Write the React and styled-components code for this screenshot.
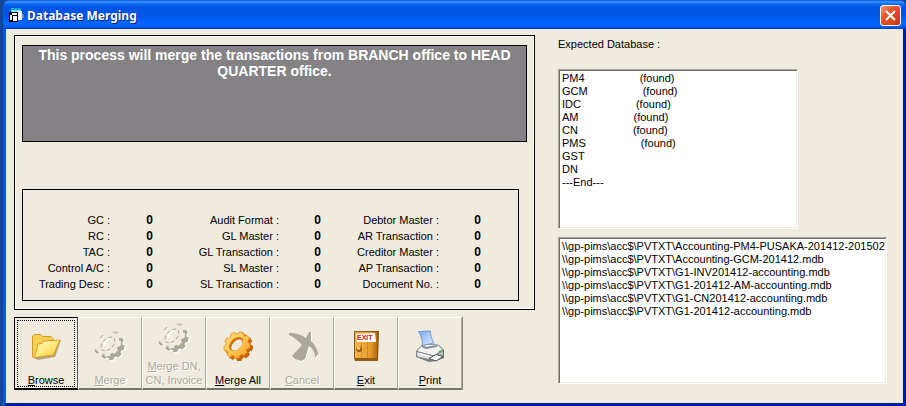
import React from "react";
import styled, { createGlobalStyle, css } from "styled-components";

const GlobalStyle = createGlobalStyle`
  *, *::before, *::after { box-sizing: border-box; }
  body { margin: 0; background: #12459c; }
`;

const Window = styled.div`
  display: flex;
  flex-direction: column;
  min-height: 100vh;
  margin-left: 3px;
  border: solid #0831d9;
  border-width: 0 3px 4px;
  border-color: #0831d9 #001ea0 #001ea0 #0a55ee;
  border-radius: 8px 8px 0 0;
  background: #efebdf;
  color: #000;
  font: 11px/13px "Liberation Sans", Arial, sans-serif;
`;

const TitleBar = styled.header`
  display: flex;
  align-items: center;
  gap: 3px;
  height: 29px;
  margin: 0 -3px;
  padding: 2px 5px 0 5px;
  border-radius: 7px 7px 0 0;
  background: linear-gradient(#0a50d8 0, #3d95ff 2px, #0a68f5 4px, #0054e3 8px, #0055e8 15px, #0066ff 23px, #0264fa 26px, #003dc4 29px);
`;

const Title = styled.h1`
  flex: 1;
  margin: 0;
  color: #fff;
  font: bold 12px/16px "Noto Sans", "Open Sans", sans-serif;
  text-shadow: 1px 1px 0 #0a1f86;
`;

const CloseButton = styled.button`
  display: grid;
  place-items: center;
  width: 21px;
  height: 21px;
  padding: 0;
  border: 1px solid #fff;
  border-radius: 3px;
  background: linear-gradient(135deg, #f0977b, #e2532c 40%, #d8431b 75%, #b93210);
`;

const Content = styled.main`
  display: grid;
  grid-template-columns: minmax(0, 521fr) minmax(0, 329fr);
  gap: 23px;
  flex: 1;
  padding: 6px 16px 11px 8px;
`;

const Column = styled.div`
  display: flex;
  flex-direction: column;
  align-items: flex-start;
`;

const Frame = styled.section`
  align-self: stretch;
  padding: 9px 7px 8px;
  border: 1px solid #000;
  box-shadow: inset 1px 1px #fff, inset -1px -1px #fff;
`;

const Notice = styled.p`
  height: 97px;
  margin: 0 0 47px;
  padding: 1px 4px;
  border: 1px solid #000;
  background: #848284;
  color: #fff;
  font-size: 14px;
  font-weight: bold;
  line-height: 16px;
  text-align: center;
`;

const Counters = styled.div`
  display: grid;
  grid-template-columns: 87px 43px 126px 42px 118px 42px;
  margin-right: 8px;
  padding: 22px 0 8px;
  border: 1px solid #000;
  line-height: 16px;
  text-align: right;
`;

const Count = styled.output`
  font-size: 12px;
  font-weight: bold;
`;

const Toolbar = styled.div`
  display: flex;
  margin-top: 7px;
  border-right: 1px solid #848278;
`;

const ToolButton = styled.button`
  display: flex;
  flex-direction: column;
  align-items: center;
  justify-content: flex-end;
  gap: ${(p) => (p.$twoLine ? 5 : 11)}px;
  width: 64px;
  height: 73px;
  padding: 0 0 1px;
  border: solid;
  border-width: 1px 1px 2px;
  border-color: #fff #aca899 #77746a #fff;
  background: #efebdf;
  color: ${(p) => (p.disabled ? "#aca899" : "#000")};
  font: inherit;
  line-height: 14px;
  white-space: nowrap;
  ${(p) => p.disabled && css`text-shadow: 1px 1px #fff;`}
  ${(p) =>
    p.$focused &&
    css`
      border-color: #000 #555 #000 #000;
      outline: 1px dotted #000;
      outline-offset: -4px;
    `}
`;

const Mnemonic = styled.span`
  text-decoration: underline;
  text-underline-offset: 1px;
`;

const ListLabel = styled.label`
  margin: 3px 0 18px;
`;

const ListBox = styled.select`
  width: ${(p) => p.$width};
  height: ${(p) => p.$height}px;
  padding: 2px 1px 1px;
  margin: 0 0 8px;
  overflow: hidden;
  border: 1px solid;
  border-color: #aca899 #fff #fff #aca899;
  border-radius: 0;
  box-shadow: inset 1px 1px #716f64, inset -1px -1px #f1efe2;
  background: #fff;
  color: #000;
  font: inherit;
  outline: 0;

  option {
    min-height: 13px;
    padding: 0 2px;
    font: inherit;
    line-height: 13px;
  }
`;

const Icon = styled.svg.attrs((p) => ({ viewBox: p.viewBox || "0 0 32 32", "aria-hidden": true }))`
  display: block;
  width: 32px;
  height: 32px;
`;

const TitleIcon = styled(Icon)`
  width: 16px;
  height: 16px;
`;

const CloseIcon = styled(Icon)`
  width: 13px;
  height: 13px;
`;

function gearPath(cx, cy) {
  const teeth = 9;
  const tilt = -Math.PI / 4;
  const points = [];
  for (let i = 0; i < teeth; i++) {
    [[-0.34, 11.8], [-0.24, 14], [0.24, 14], [0.34, 11.8]].forEach(([d, r]) => {
      const a = ((i + d) / teeth) * Math.PI * 2 + 0.2;
      const x = Math.cos(a) * r;
      const y = Math.sin(a) * r * 0.88;
      const px = cx + x * Math.cos(tilt) - y * Math.sin(tilt);
      const py = cy + x * Math.sin(tilt) + y * Math.cos(tilt);
      points.push(`${px.toFixed(2)} ${py.toFixed(2)}`);
    });
  }
  return `M${points.join("L")}Z`;
}

const GearIcon = () => (
  <Icon>
    <defs>
      <linearGradient id="gearFace" x1="0" y1="0" x2="1" y2="1">
        <stop offset="0" stopColor="#ffe58a" />
        <stop offset="0.5" stopColor="#ffc652" />
        <stop offset="1" stopColor="#f7a02a" />
      </linearGradient>
    </defs>
    <path d={gearPath(17.5, 17.5)} fill="#c96508" stroke="#c0640c" strokeLinejoin="round" />
    <path d={gearPath(15, 15)} fill="url(#gearFace)" stroke="#ee9a24" strokeLinejoin="round" />
    <ellipse cx="14" cy="14" rx="8.3" ry="5.3" transform="rotate(-45 14 14)" fill="#d0700e" />
    <ellipse cx="14.8" cy="15" rx="6.8" ry="4" transform="rotate(-45 14.8 15)" fill="#efebdf" />
  </Icon>
);

const GearOffIcon = () => (
  <Icon>
    <path d={gearPath(18.5, 18)} fill="#fff" />
    <path d={gearPath(17.5, 17)} fill="#aca899" />
    <path d={gearPath(13.5, 13)} fill="#efebdf" stroke="#efebdf" />
    <path d="M20 1v2h3V1M6 8l3-3" fill="none" stroke="#aca899" />
    <ellipse cx="14" cy="14" rx="8.3" ry="5" transform="rotate(-45 14 14)" fill="none" stroke="#aca899" strokeDasharray="4 2" />
    <path d="M10 16c0-4 3-7 7-7" fill="none" stroke="#fff" strokeWidth="2" />
    <path d="M1 20l3 3" fill="none" stroke="#aca899" strokeWidth="2" />
  </Icon>
);

const FolderIcon = () => (
  <Icon>
    <defs>
      <linearGradient id="folderFront" x1="0" y1="0" x2="1" y2="1">
        <stop offset="0" stopColor="#fffbd0" />
        <stop offset="0.5" stopColor="#ffe97c" />
        <stop offset="1" stopColor="#f6bd2c" />
      </linearGradient>
    </defs>
    <path d="M4 28L31 10l-6 17L8 30z" fill="#8a7440" opacity="0.6" />
    <path d="M2.500 6l2-1.500h6l2 2h8.500l2 2V12L5 28l-2.500-1z" fill="#f7cf52" stroke="#d3982a" />
    <path d="M4.500 27.500L8 14l4-.5 2-2.500 16-1-6.500 15z" fill="url(#folderFront)" stroke="#d89c25" strokeLinejoin="round" />
  </Icon>
);

const cancelShape = "M3 3c7 0 13 2 17 5l3-6h2v9c5 5 7 9 7 13l-3 4c0-6-2-9-6-12l-4 13-4 2-6-2-3-3 10-11C12 11 8 7 3 5z";

const CancelIcon = () => (
  <Icon>
    <path d={cancelShape} fill="#fff" transform="translate(1 1)" />
    <path d={cancelShape} fill="#aca899" />
  </Icon>
);

const SignText = styled.text`
  font: bold 7px "Liberation Sans", Arial, sans-serif;
  fill: #e01020;
`;

const ExitIcon = () => (
  <Icon>
    <defs>
      <linearGradient id="doorWood" x1="0" y1="0" x2="1" y2="0">
        <stop offset="0" stopColor="#f4b44c" />
        <stop offset="0.7" stopColor="#e69a2c" />
        <stop offset="1" stopColor="#b56a12" />
      </linearGradient>
    </defs>
    <path d="M4 1h25v4l-1 26H5L4 28z" fill="#945a12" />
    <path d="M5 2h22v26H5z" fill="url(#doorWood)" />
    <path d="M11.500 12v16M17.500 12v16M22.500 12v16" stroke="#d08a2a" />
    <path d="M6 4l19-1 1 9H7z" fill="#fff" />
    <SignText x="7" y="10">EXIT</SignText>
    <circle cx="9" cy="19" r="3" fill="#9b5a12" />
    <circle cx="8.500" cy="18" r="2" fill="#f6c56b" />
  </Icon>
);

const PrinterIcon = () => (
  <Icon>
    <defs>
      <linearGradient id="paper" x1="0" y1="0" x2="1" y2="1">
        <stop offset="0" stopColor="#75a5ff" />
        <stop offset="1" stopColor="#e5f1ff" />
      </linearGradient>
    </defs>
    <path d="M2 21l7-7 16 1 5 5v8l-8 3-7 1L2 27z" fill="#74787c" />
    <path d="M2.500 21.500L9 14l15 1 5 5-9 6z" fill="#f3f3f1" stroke="#94989b" strokeLinejoin="round" />
    <path d="M2.500 21.500L20 26v4.500L3 27z" fill="#dfe1e1" stroke="#85898c" />
    <path d="M20 26l9.500-6v6L20 30.500z" fill="#b9bcbf" stroke="#6c7074" />
    <path d="M4.500 1.500L16.500 1c0 5 1 8 3.500 12L8.500 15.500c0-5-1-9-4-14z" fill="url(#paper)" stroke="#7598c8" />
    <path d="M8 16l4 2 11-2" fill="none" stroke="#8a8e92" strokeWidth="2" />
    <path d="M15 28.500l7-4 7 2-7 4.500z" fill="#fff" stroke="#4b4e52" />
    <path d="M4 23.500l12 3" stroke="#fff" />
    <path d="M25 22l2-1" stroke="#4cbb45" strokeWidth="2" />
  </Icon>
);

const FormIcon = () => (
  <TitleIcon viewBox="0 0 16 16">
    <path d="M3 1h10v8H3z" fill="#82dff0" />
    <path d="M3 0h10v2H3z" fill="#17a9ce" />
    <path d="M9 3h5v9H9z" fill="#f5ffff" />
    <path d="M14 6h2v4h-2z" fill="#5d83b8" />
    <path d="M1 4h9v10H1z" fill="#000" />
    <path d="M2 7h2v5H2zM5 8h4v5H5zM4 5h5v2H4z" fill="#fff" />
  </TitleIcon>
);

const counters = [
  ["GC :", "Audit Format :", "Debtor Master :"],
  ["RC :", "GL Master :", "AR Transaction :"],
  ["TAC :", "GL Transaction :", "Creditor Master :"],
  ["Control A/C :", "SL Master :", "AP Transaction :"],
  ["Trading Desc :", "SL Transaction :", "Document No. :"],
];

const gap = "\u00a0".repeat(18);
const databases = [
  ...["PM4", "GCM", "IDC", "AM", "CN", "PMS"].map((name) => `${name}${gap}(found)`),
  "GST",
  "DN",
  "---End---",
];

const files = [
  "Accounting-PM4-PUSAKA-201412-201502",
  "Accounting-GCM-201412.mdb",
  "G1-INV201412-accounting.mdb",
  "G1-201412-AM-accounting.mdb",
  "G1-CN201412-accounting.mdb",
  "G1-201412-accounting.mdb",
].map((name) => `\\\\gp-pims\\acc$\\PVTXT\\${name}`);

const tools = [
  { key: "B", rest: "rowse", icon: FolderIcon, focused: true },
  { key: "M", rest: "erge", icon: GearOffIcon, disabled: true },
  { key: "M", rest: "erge DN,", second: "CN, Invoice", icon: GearOffIcon, disabled: true },
  { key: "M", rest: "erge All", icon: GearIcon },
  { key: "C", rest: "ancel", icon: CancelIcon, disabled: true },
  { key: "E", rest: "xit", icon: ExitIcon },
  { key: "P", rest: "rint", icon: PrinterIcon },
];

export default function App() {
  return (
    <>
      <GlobalStyle />
      <Window>
        <TitleBar>
          <FormIcon />
          <Title>Database Merging</Title>
          <CloseButton type="button" aria-label="Close">
            <CloseIcon viewBox="0 0 13 13">
              <path d="M2 2l9 9M11 2l-9 9" stroke="#fff" strokeWidth="2" />
            </CloseIcon>
          </CloseButton>
        </TitleBar>
        <Content>
          <Column>
            <Frame>
              <Notice>
                This process will merge the transactions from BRANCH office to HEAD QUARTER office.
              </Notice>
              <Counters>
                {counters.flat().map((label, i) => (
                  <React.Fragment key={label}>
                    <label htmlFor={`count-${i}`}>{label}</label>
                    <Count id={`count-${i}`}>0</Count>
                  </React.Fragment>
                ))}
              </Counters>
            </Frame>
            <Toolbar role="toolbar" aria-label="Merge actions">
              {tools.map(({ key, rest, second, icon: Glyph, disabled, focused }) => (
                <ToolButton
                  key={key + rest}
                  type="button"
                  disabled={disabled}
                  $focused={focused}
                  $twoLine={Boolean(second)}
                >
                  <Glyph />
                  <span>
                    <Mnemonic>{key}</Mnemonic>
                    {rest}
                    {second && <br />}
                    {second}
                  </span>
                </ToolButton>
              ))}
            </Toolbar>
          </Column>
          <Column>
            <ListLabel htmlFor="databases">Expected Database :</ListLabel>
            <ListBox id="databases" size={9} $width="73%" $height={160}>
              {databases.map((item) => (
                <option key={item}>{item}</option>
              ))}
            </ListBox>
            <ListBox aria-label="Database files" size={6} $width="100%" $height={147}>
              {files.map((item) => (
                <option key={item}>{item}</option>
              ))}
            </ListBox>
          </Column>
        </Content>
      </Window>
    </>
  );
}
